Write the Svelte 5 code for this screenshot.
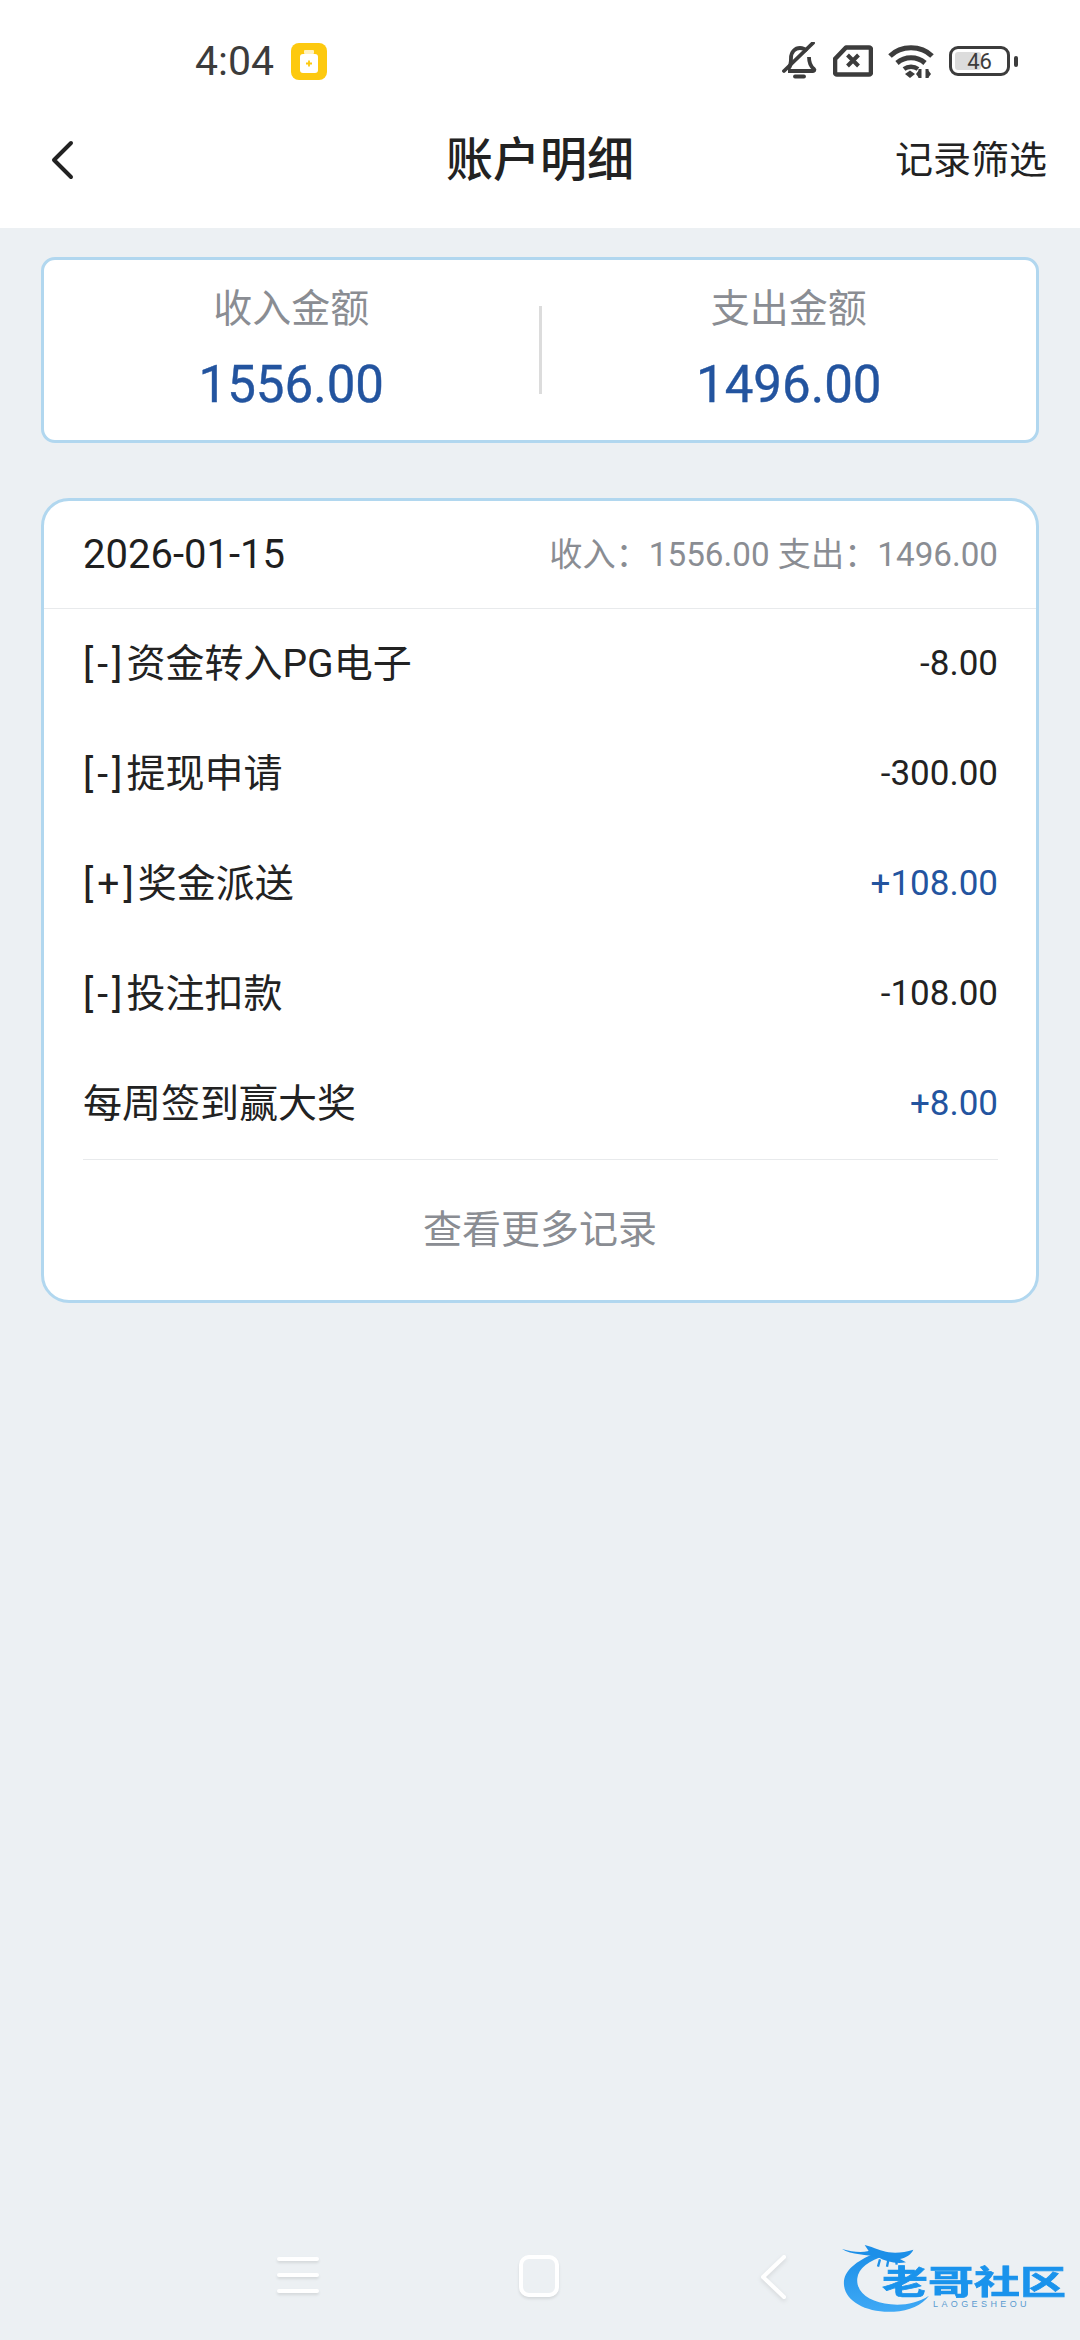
<script>
  const rows = [
    { tag: "[-]", name: "资金转入PG电子", amount: "-8.00" },
    { tag: "[-]", name: "提现申请", amount: "-300.00" },
    { tag: "[+]", name: "奖金派送", amount: "+108.00", plus: true },
    { tag: "[-]", name: "投注扣款", amount: "-108.00" },
    { tag: "", name: "每周签到赢大奖", amount: "+8.00", plus: true }
  ];
</script>

<div class="page">
  <div class="top">
    <div class="status">
      <span class="time">4:04</span>
      <svg class="app-badge" viewBox="0 0 36 37">
        <rect width="36" height="37" rx="8" fill="#fdc90f" />
        <rect x="13" y="7" width="10" height="4" rx="1" fill="#fff" opacity=".75" />
        <rect x="9" y="11" width="18" height="19" rx="3" fill="#fff" />
        <path d="M18 17.5v6M15 20.5h6" stroke="#fdc90f" stroke-width="1.8" />
      </svg>
      <div class="status-right">
        <svg width="36" height="38" viewBox="0 0 36 38" fill="none" stroke="#3c3c3c" stroke-width="3.8">
          <path d="M6 27c3-3 3-6 3-11 0-6 4-10 9-10 3 0 5 1 7 3M27 15c0 6 1 9 5 12 1 1 0 2-1 2H6" stroke-linejoin="round" />
          <path d="M2 29 31 1" stroke-linecap="round" />
          <path d="M13 34.500h9" stroke-linecap="round" />
        </svg>
        <svg width="40" height="32" viewBox="0 0 40 32" fill="none">
          <path d="M13 2.500h23a2 2 0 0 1 2 2v23a2 2 0 0 1-2 2H4a2 2 0 0 1-2-2V14z" stroke="#3c3c3c" stroke-width="4.600" stroke-linejoin="round" />
          <path d="M14.500 10l11 11M25.500 10l-11 11" stroke="#3c3c3c" stroke-width="4" />
        </svg>
        <svg width="46" height="35" viewBox="0 0 46 35" fill="none" stroke="#3c3c3c" stroke-linecap="butt">
          <path d="M2 12C13 1 33 1 44 12" stroke-width="5" />
          <path d="M9 19c8-7 20-7 28 0" stroke-width="5" />
          <path d="M16 25c4-3 10-3 14 0" stroke-width="4.500" />
          <path d="M17 30l5-3.500 5 3.500-5 4z" fill="#3c3c3c" stroke="none" />
          <path d="M32 25v9M39 25v9" stroke-width="3" />
          <path d="M28 30l3-4v8zM43 30l-3-4v8z" fill="#3c3c3c" stroke="none" />
        </svg>
        <div class="battery">
          <div class="battery-shell">
            <span class="battery-fill"></span>
            <span class="battery-num">46</span>
          </div>
          <span class="battery-nub"></span>
        </div>
      </div>
    </div>
    <div class="nav">
      <svg class="back" width="26" height="40" viewBox="0 0 26 40" fill="none">
        <path d="M21 3 4 20l17 17" stroke="#222" stroke-width="4" stroke-linecap="round" stroke-linejoin="round" />
      </svg>
      <h1>账户明细</h1>
      <span class="filter">记录筛选</span>
    </div>
  </div>

  <main>
    <section class="summary">
      <div class="sum-col">
        <span class="sum-label">收入金额</span>
        <span class="sum-value">1556.00</span>
      </div>
      <i class="sum-line"></i>
      <div class="sum-col">
        <span class="sum-label">支出金额</span>
        <span class="sum-value">1496.00</span>
      </div>
    </section>

    <section class="detail">
      <div class="day">
        <span class="date">2026-01-15</span>
        <span class="totals">收入：1556.00 支出：1496.00</span>
      </div>
      <div class="list">
        {#each rows as row}
          <div class="row">
            <span><span class="tag">{row.tag}</span>{row.name}</span>
            <span class="amount" class:plus={row.plus}>{row.amount}</span>
          </div>
        {/each}
      </div>
      <div class="more">查看更多记录</div>
    </section>
  </main>

  <footer>
    <div class="lines"><i></i><i></i><i></i></div>
    <div class="home"></div>
    <svg class="prev" width="30" height="48" viewBox="0 0 30 48" fill="none">
      <path d="M26 4 5 24l21 20" stroke="#fff" stroke-width="4" stroke-linecap="round" stroke-linejoin="round" />
    </svg>
  </footer>

  <div class="mark">
    <svg width="260" height="110" viewBox="0 0 780 330">
      <defs>
        <linearGradient id="sw" x1="0" y1="0" x2="0" y2="1">
          <stop offset="0" stop-color="#1c8fe8" />
          <stop offset="1" stop-color="#3fa9f5" />
        </linearGradient>
      </defs>
      <path d="M165 70C105 95 68 125 72 165c4 50 70 85 150 80 45-3 85-20 105-48-35 22-75 30-115 26-60-5-105-35-100-78 3-30 35-55 85-68z" fill="url(#sw)" />
      <path d="M66 57c30 8 55 12 80 6l-12-18c30 8 50 18 72 22 25 3 50 0 74-8-6 14-22 24-40 28l18 10c-30 6-60-2-85-16-30-8-80-6-107-24z" fill="#1c8fe8" />
      <path d="M180 88l-6 22M205 90l-4 20M228 88l2 16" stroke="#1c8fe8" stroke-width="7" fill="none" />
    </svg>
    <span class="mark-name">老哥社区</span>
    <span class="mark-sub">LAOGESHEOU</span>
  </div>
</div>

<style>
  :global(body) {
    margin: 0;
    background: #ecf0f3;
  }

  .page {
    position: relative;
    width: 1080px;
    height: 2340px;
    display: flex;
    flex-direction: column;
    background: #ecf0f3;
    font-family: Roboto, "Noto Sans CJK SC", sans-serif;
    color: #1f1f1f;
    overflow: hidden;
  }

  .top {
    height: 228px;
    background: #fff;
  }

  .status {
    height: 122px;
    box-sizing: border-box;
    padding: 0 62px 0 195px;
    display: flex;
    align-items: center;
  }

  .time {
    font-size: 41px;
    color: #3c3c3c;
    width: 96px;
  }

  .app-badge {
    width: 36px;
    height: 37px;
  }

  .status-right {
    margin-left: auto;
    display: flex;
    align-items: center;
    gap: 15px;
  }

  .battery {
    display: flex;
    align-items: center;
    gap: 4px;
  }

  .battery-shell {
    position: relative;
    width: 61px;
    height: 30px;
    box-sizing: border-box;
    border: 3px solid #3c3c3c;
    border-radius: 9px;
    display: flex;
    align-items: center;
    justify-content: center;
  }

  .battery-fill {
    position: absolute;
    left: 3px;
    top: 3px;
    bottom: 3px;
    width: 26px;
    background: #dcdcdc;
    border-radius: 3px;
  }

  .battery-num {
    position: relative;
    font-size: 22px;
    color: #3c3c3c;
  }

  .battery-nub {
    width: 4px;
    height: 11px;
    border-radius: 2px;
    background: #3c3c3c;
  }

  .nav {
    height: 76px;
    padding: 0 33px 0 50px;
    display: flex;
    align-items: center;
    justify-content: space-between;
    position: relative;
  }

  h1 {
    position: absolute;
    left: 0;
    right: 0;
    margin: 0;
    text-align: center;
    font-size: 47px;
    line-height: 56px;
    font-weight: 500;
    color: #222;
  }

  .filter {
    font-size: 38px;
    line-height: 48px;
    color: #222;
  }

  main {
    flex: 1;
    padding: 29px 41px 0;
    display: flex;
    flex-direction: column;
    gap: 55px;
  }

  .summary {
    height: 186px;
    box-sizing: border-box;
    background: #fff;
    border: 3px solid #b1d7ef;
    border-radius: 14px;
    display: flex;
    align-items: center;
  }

  .sum-col {
    flex: 1;
    display: flex;
    flex-direction: column;
    align-items: center;
    gap: 21px;
  }

  .sum-label {
    font-size: 39px;
    line-height: 48px;
    color: #8a8d93;
  }

  .sum-value {
    font-size: 51px;
    line-height: 62px;
    color: #23549f;
    -webkit-text-stroke: 0.4px #23549f;
  }

  .sum-line {
    width: 3px;
    height: 88px;
    background: #dcdcdc;
  }

  .detail {
    background: #fff;
    border: 3px solid #b1d7ef;
    border-radius: 28px;
  }

  .day {
    height: 107px;
    padding: 0 38px 0 39px;
    display: flex;
    align-items: center;
    justify-content: space-between;
    border-bottom: 1px solid #e8eaec;
  }

  .date {
    font-size: 40px;
    line-height: 48px;
    color: #1f1f1f;
  }

  .totals {
    font-size: 33.200px;
    line-height: 44px;
    color: #8a8d93;
  }

  .list {
    margin: 0 38px 0 39px;
    border-bottom: 1px solid #e8eaec;
  }

  .row {
    height: 110px;
    display: flex;
    align-items: center;
    justify-content: space-between;
    font-size: 39px;
    line-height: 48px;
    color: #222;
  }

  .tag {
    letter-spacing: 4px;
  }

  .amount {
    font-size: 35px;
  }

  .plus {
    color: #23549f;
  }

  .more {
    height: 140px;
    display: flex;
    align-items: center;
    justify-content: center;
    font-size: 39px;
    line-height: 48px;
    color: #8a8d93;
  }

  footer {
    height: 110px;
    box-sizing: border-box;
    padding: 0 292px 0 277px;
    display: flex;
    align-items: flex-start;
    justify-content: space-between;
  }

  .lines {
    width: 42px;
    margin-top: 27px;
    display: flex;
    flex-direction: column;
    gap: 12px;
  }

  .lines i {
    height: 4px;
    background: #fff;
    border-radius: 2px;
    box-shadow: 0 2px 3px rgba(0, 0, 0, 0.1);
  }

  .home {
    width: 40px;
    height: 42px;
    margin-top: 25px;
    box-sizing: border-box;
    border: 4px solid #fff;
    border-radius: 10px;
    box-shadow: 0 2px 3px rgba(0, 0, 0, 0.1);
  }

  .prev {
    margin-top: 23px;
    filter: drop-shadow(0 2px 2px rgba(0, 0, 0, 0.1));
  }

  .mark {
    position: absolute;
    left: 820px;
    top: 2230px;
    width: 260px;
    height: 110px;
  }

  .mark-name {
    position: absolute;
    left: 62px;
    top: 30px;
    font-size: 46px;
    line-height: 44px;
    font-weight: 700;
    white-space: nowrap;
    color: #1a93ec;
    -webkit-text-stroke: 1px #1a93ec;
    transform: scaleY(0.72);
  }

  .mark-sub {
    position: absolute;
    left: 113px;
    top: 69px;
    font-size: 9px;
    letter-spacing: 3.400px;
    color: #5a9bd0;
    font-family: "Liberation Sans", sans-serif;
  }
</style>
